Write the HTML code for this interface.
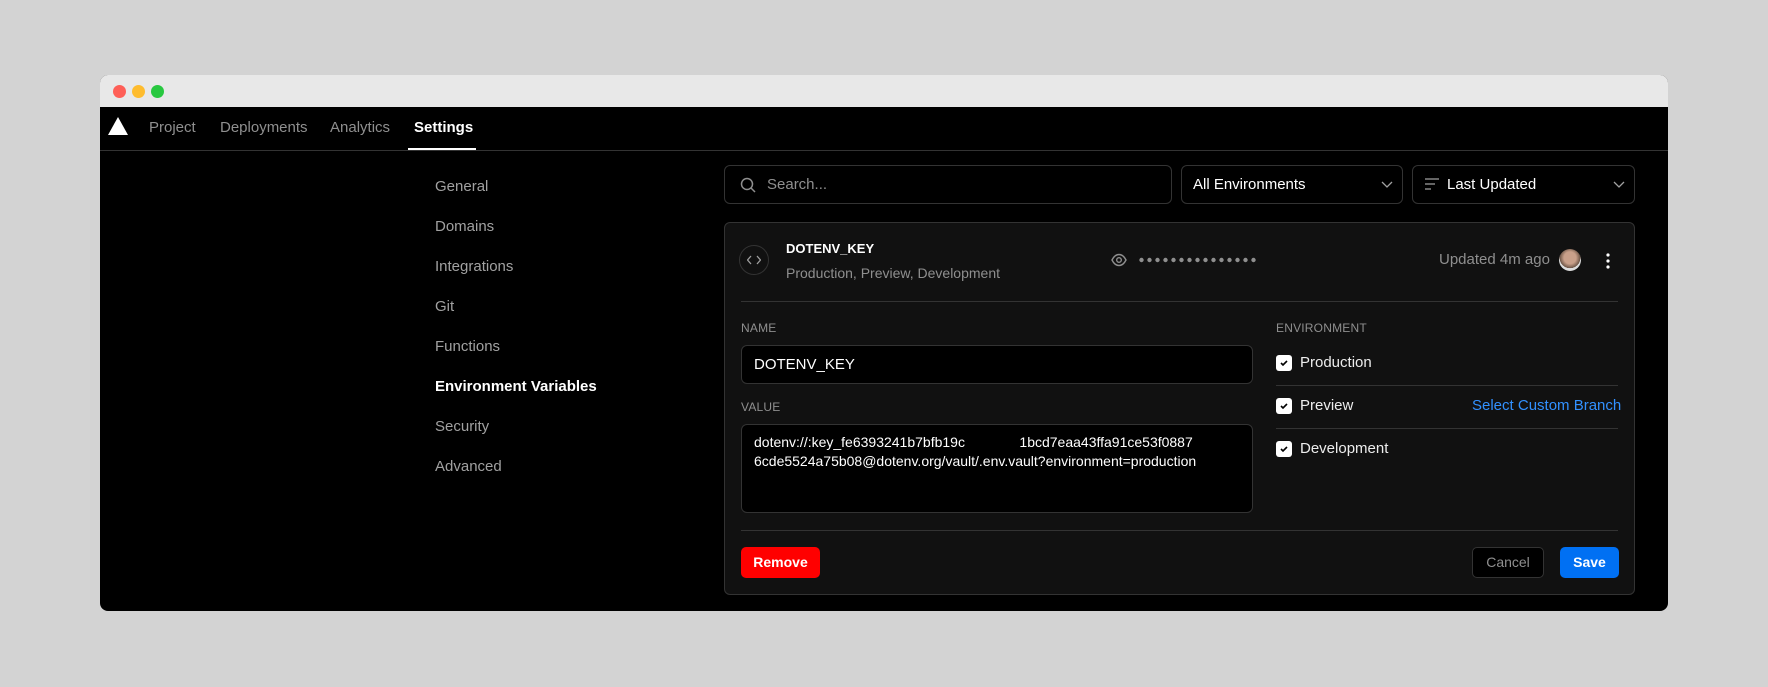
<!DOCTYPE html>
<html><head><meta charset="utf-8"><style>
*{box-sizing:border-box;margin:0;padding:0}
body{width:1768px;height:687px;background:#d3d3d3;font-family:"Liberation Sans",sans-serif;position:relative;overflow:hidden;color:#fff}
.a{position:absolute}
.win{left:100px;top:75px;width:1568px;height:536px;background:#000;border-radius:8px;overflow:hidden}
.tb{left:0;top:0;width:1568px;height:32px;background:#e8e8e8}
.dot{width:13px;height:13px;border-radius:50%;top:10px}
.nav{font-size:15px;color:#8f8f8f;top:44px}
.side{font-size:15px;color:#a1a1a1;left:335px}
.box{border:1px solid #333;border-radius:6px;background:#000}
.lbl{font-size:12px;color:#8f8f8f;letter-spacing:.2px}
.cb{width:16px;height:16px;background:#fff;border-radius:3px}
.cb svg{position:absolute;left:3px;top:3px}
.env{font-size:15px;color:#ededed}
.sep{height:1px;background:#333}
</style></head><body>
<div class="a win">
 <div class="a tb"></div>
 <div class="a dot" style="left:13px;background:#fe5f57"></div>
 <div class="a dot" style="left:32px;background:#febc2e"></div>
 <div class="a dot" style="left:51px;background:#28c840"></div>
 <svg class="a" style="left:8px;top:42px" width="20" height="18"><polygon points="10,0 20,18 0,18" fill="#fff"/></svg>
 <div class="a nav" style="left:49px">Project</div>
 <div class="a nav" style="left:120px">Deployments</div>
 <div class="a nav" style="left:230px">Analytics</div>
 <div class="a nav" style="left:314px;color:#fff;font-weight:bold">Settings</div>
 <div class="a" style="left:308px;top:73px;width:68px;height:3px;background:#fff"></div>
 <div class="a" style="left:0;top:75px;width:1568px;height:1px;background:#333"></div>
 <div class="a side" style="top:103px">General</div>
 <div class="a side" style="top:143px">Domains</div>
 <div class="a side" style="top:183px">Integrations</div>
 <div class="a side" style="top:223px">Git</div>
 <div class="a side" style="top:263px">Functions</div>
 <div class="a side" style="top:303px;color:#fff;font-weight:bold">Environment Variables</div>
 <div class="a side" style="top:343px">Security</div>
 <div class="a side" style="top:383px">Advanced</div>

 <div class="a box" style="left:624px;top:90px;width:448px;height:39px"></div>
 <svg class="a" style="left:640px;top:102px" width="16" height="16" fill="none" stroke="#8f8f8f" stroke-width="1.5"><circle cx="7" cy="7" r="5.5"/><path d="M11 11l4 4"/></svg>
 <div class="a" style="left:667px;top:101px;font-size:15px;color:#8f8f8f">Search...</div>
 <div class="a box" style="left:1081px;top:90px;width:222px;height:39px"></div>
 <div class="a" style="left:1093px;top:101px;font-size:15px">All Environments</div>
 <svg class="a" style="left:1281px;top:106px" width="12" height="8" fill="none" stroke="#a1a1a1" stroke-width="1.3"><path d="M1 1l5 5 5-5"/></svg>
 <div class="a box" style="left:1312px;top:90px;width:223px;height:39px"></div>
 <svg class="a" style="left:1325px;top:103px" width="14" height="12" stroke="#a1a1a1" stroke-width="1.3"><path d="M0 1h14M0 6h10M0 11h6"/></svg>
 <div class="a" style="left:1347px;top:101px;font-size:15px">Last Updated</div>
 <svg class="a" style="left:1513px;top:106px" width="12" height="8" fill="none" stroke="#a1a1a1" stroke-width="1.3"><path d="M1 1l5 5 5-5"/></svg>

 <div class="a" style="left:624px;top:147px;width:911px;height:373px;background:#111;border:1px solid #333;border-radius:6px"></div>
 <div class="a" style="left:639px;top:170px;width:30px;height:30px;border:1px solid #333;border-radius:50%"></div>
 <svg class="a" style="left:647px;top:180px" width="14" height="10" fill="none" stroke="#a1a1a1" stroke-width="1.3"><path d="M4 1L0.5 5 4 9M10 1l3.5 4L10 9"/></svg>
 <div class="a" style="left:686px;top:166px;font-size:13px;font-weight:bold">DOTENV_KEY</div>
 <div class="a" style="left:686px;top:190px;font-size:14px;color:#8f8f8f">Production, Preview, Development</div>
 <svg class="a" style="left:1011px;top:177px" width="16" height="16" fill="none" stroke="#8f8f8f" stroke-width="1.4"><path d="M1 8C3 4 5.5 2.5 8 2.5S13 4 15 8c-2 4-4.5 5.5-7 5.5S3 12 1 8z"/><circle cx="8" cy="8" r="2.3"/></svg>
 <svg class="a" style="left:1039px;top:182px" width="118" height="6" fill="#8f8f8f">
  <circle cx="2.5" cy="3" r="2.2"/><circle cx="10.5" cy="3" r="2.2"/><circle cx="18.5" cy="3" r="2.2"/><circle cx="26.5" cy="3" r="2.2"/><circle cx="34.5" cy="3" r="2.2"/><circle cx="42.5" cy="3" r="2.2"/><circle cx="50.5" cy="3" r="2.2"/><circle cx="58.5" cy="3" r="2.2"/><circle cx="66.5" cy="3" r="2.2"/><circle cx="74.5" cy="3" r="2.2"/><circle cx="82.5" cy="3" r="2.2"/><circle cx="90.5" cy="3" r="2.2"/><circle cx="98.5" cy="3" r="2.2"/><circle cx="106.5" cy="3" r="2.2"/><circle cx="114.5" cy="3" r="2.2"/>
 </svg>
 <div class="a" style="left:1339px;top:176px;font-size:15px;color:#8f8f8f">Updated 4m ago</div>
 <div class="a" style="left:1459px;top:174px;width:22px;height:22px;border-radius:50%;background:radial-gradient(circle at 50% 40%,#c9a08a 0 35%,#6b5446 60%,#ddd 61%)"></div>
 <svg class="a" style="left:1506px;top:178px" width="4" height="16" fill="#fff"><circle cx="2" cy="2" r="1.6"/><circle cx="2" cy="8" r="1.6"/><circle cx="2" cy="14" r="1.6"/></svg>
 <div class="a sep" style="left:641px;top:226px;width:877px"></div>

 <div class="a lbl" style="left:641px;top:246px">NAME</div>
 <div class="a box" style="left:641px;top:270px;width:512px;height:39px"></div>
 <div class="a" style="left:654px;top:281px;font-size:15px">DOTENV_KEY</div>
 <div class="a lbl" style="left:641px;top:325px">VALUE</div>
 <div class="a box" style="left:641px;top:349px;width:512px;height:89px"></div>
 <div class="a" style="left:654px;top:358px;font-size:14px;line-height:19px;white-space:pre">dotenv://:key_fe6393241b7bfb19c              1bcd7eaa43ffa91ce53f0887
6cde5524a75b08@dotenv.org/vault/.env.vault?environment=production</div>

 <div class="a lbl" style="left:1176px;top:246px">ENVIRONMENT</div>
 <div class="a cb" style="left:1176px;top:280px"><svg width="10" height="10" fill="none" stroke="#000" stroke-width="1.6"><path d="M2 5l2 2 4-4"/></svg></div>
 <div class="a env" style="left:1200px;top:279px">Production</div>
 <div class="a sep" style="left:1176px;top:310px;width:342px"></div>
 <div class="a cb" style="left:1176px;top:323px"><svg width="10" height="10" fill="none" stroke="#000" stroke-width="1.6"><path d="M2 5l2 2 4-4"/></svg></div>
 <div class="a env" style="left:1200px;top:322px">Preview</div>
 <div class="a" style="left:1372px;top:322px;font-size:15px;color:#3291ff">Select Custom Branch</div>
 <div class="a sep" style="left:1176px;top:353px;width:342px"></div>
 <div class="a cb" style="left:1176px;top:366px"><svg width="10" height="10" fill="none" stroke="#000" stroke-width="1.6"><path d="M2 5l2 2 4-4"/></svg></div>
 <div class="a env" style="left:1200px;top:365px">Development</div>

 <div class="a sep" style="left:641px;top:455px;width:877px"></div>
 <div class="a" style="left:641px;top:472px;width:79px;height:31px;background:#f00;border-radius:5px;font-size:14px;font-weight:bold;text-align:center;line-height:31px">Remove</div>
 <div class="a" style="left:1372px;top:472px;width:72px;height:31px;background:#000;border:1px solid #333;border-radius:5px;font-size:14px;color:#8f8f8f;text-align:center;line-height:29px">Cancel</div>
 <div class="a" style="left:1460px;top:472px;width:59px;height:31px;background:#0070f3;border-radius:5px;font-size:14px;font-weight:bold;text-align:center;line-height:31px">Save</div>
</div>
</body></html>
